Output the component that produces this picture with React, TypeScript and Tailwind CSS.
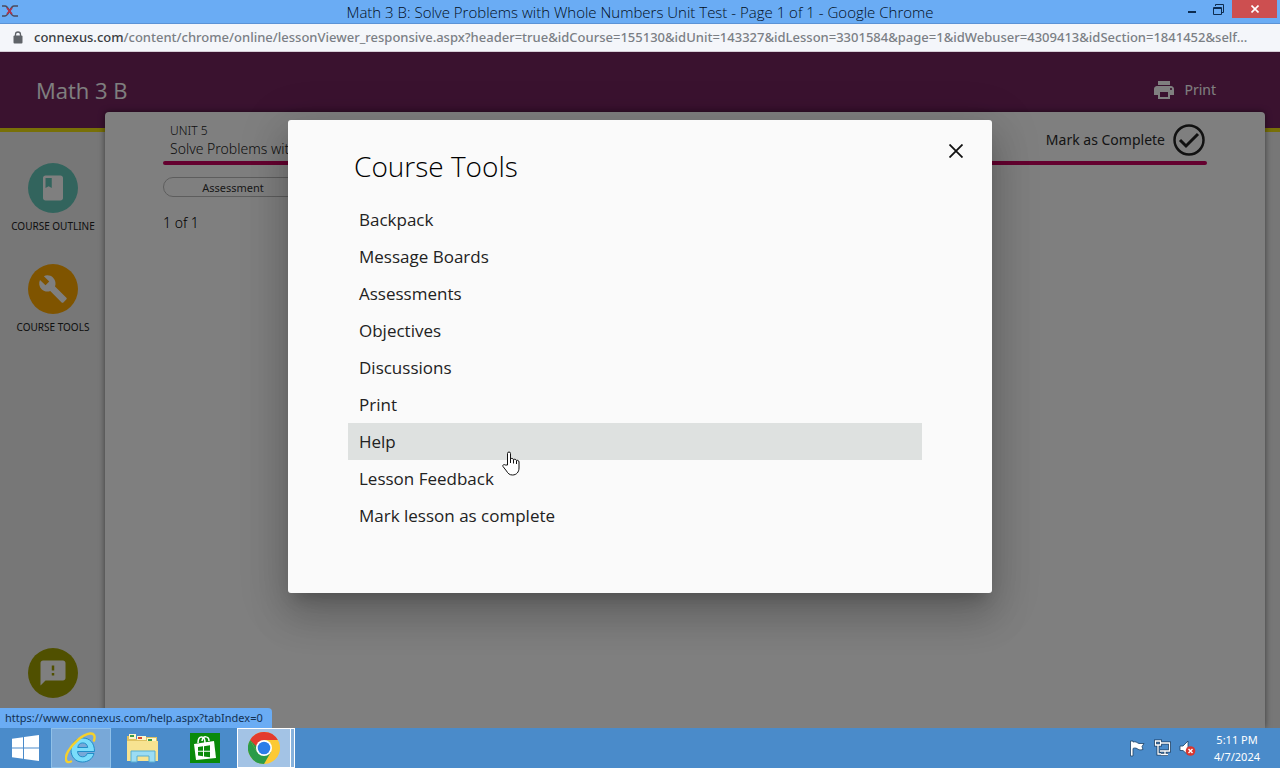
import type { ReactNode } from "react";

const tools = [
  "Backpack",
  "Message Boards",
  "Assessments",
  "Objectives",
  "Discussions",
  "Print",
  "Help",
  "Lesson Feedback",
  "Mark lesson as complete",
];

function TitleBar() {
  return (
    <header className="grid h-6 grid-cols-[1fr_auto_1fr] border-b border-[#5b93d6] bg-[#6aacf4]">
      <svg className="mt-1 ml-px" width="17" height="14" viewBox="0 0 17 14" fill="none" strokeWidth="1.600">
        <path d="M1 2h3c2 0 3 2 4.500 5S11 12 13 12h4" stroke="#4b4a5c" />
        <path d="M1 12h3c2 0 3-2 4.500-5S11 2 13 2h4" stroke="#4b4a5c" />
        <path d="M6 4l5 6M6 10l5-6" stroke="#b5344a" />
      </svg>
      <h1 className="font-['Open_Sans','Noto_Sans',sans-serif] text-[15px] leading-6 font-light text-[#020c1a]">
        Math 3 B: Solve Problems with Whole Numbers Unit Test - Page 1 of 1 - Google Chrome
      </h1>
      <div className="flex items-start justify-end pr-[3px]">
        <button aria-label="Minimize" className="flex h-[18px] w-6 items-end justify-center pb-[5px]">
          <span className="h-[2px] w-2 bg-[#0d2c50]" />
        </button>
        <button aria-label="Restore" className="flex h-[18px] w-7 items-center justify-center">
          <svg width="11" height="11" viewBox="0 0 11 11" fill="none" stroke="#0d2c50">
            <path d="M2.500 2V.5h8v8H9" />
            <path d="M.5 3.500h8v7h-8zM.5 4.500h8" />
          </svg>
        </button>
        <button aria-label="Close" className="flex h-[18px] w-[45px] items-center justify-center bg-[#cd4f50]">
          <svg width="8" height="8" viewBox="0 0 8 8" stroke="#fff" strokeWidth="1.600">
            <path d="M.5.5l7 7M7.500.5l-7 7" />
          </svg>
        </button>
      </div>
    </header>
  );
}

function AddressBar() {
  return (
    <div className="flex h-7 items-center gap-[11px] border-b border-[#d5cdd6] bg-[#f4f6fa] pl-[13px]">
      <svg className="shrink-0" width="10" height="13" viewBox="0 0 10 13">
        <rect x="0.500" y="4.500" width="9" height="8" rx="1" fill="#5f6368" />
        <path d="M2.500 5V3.500a2.500 2.500 0 0 1 5 0V5" fill="none" stroke="#5f6368" strokeWidth="1.300" />
      </svg>
      <p className="min-w-0 whitespace-nowrap text-[13px] font-medium text-[#7b7f85]">
        <span className="text-[#3a3d42]">connexus.com</span>
        /content/chrome/online/lessonViewer_responsive.aspx?header=true&amp;idCourse=155130&amp;idUnit=143327&amp;idLesson=3301584&amp;page=1&amp;idWebuser=4309413&amp;idSection=1841452&amp;self...
      </p>
    </div>
  );
}

function SideButton({ color, label, children }: { color: string; label?: string; children: ReactNode }) {
  return (
    <button aria-label={label ?? "Feedback"} className="flex flex-col items-center gap-[5px] whitespace-nowrap text-[10px] leading-4 text-[#222]">
      <span className={`flex size-[50px] items-center justify-center rounded-full ${color}`}>
        <svg width="30" height="30" viewBox="0 0 24 24" fill="#fff">
          {children}
        </svg>
      </span>
      {label}
    </button>
  );
}

function Lesson() {
  return (
    <div className="flex min-h-0 flex-1 flex-col bg-[#eee]">
      <div className="flex h-20 shrink-0 items-center justify-between border-b-4 border-[#f0e010] bg-[#74245f] pr-16 pl-9 text-white">
        <h2 className="font-['Open_Sans','Noto_Sans',sans-serif] text-[22px] leading-7">Math 3 B</h2>
        <button className="flex items-center gap-2 text-sm">
          <svg width="24" height="24" viewBox="0 0 24 24" fill="currentColor">
            <path d="M19 8H5c-1.660 0-3 1.340-3 3v6h4v4h12v-4h4v-6c0-1.660-1.340-3-3-3zm-3 11H8v-5h8v5zm3-7c-.55 0-1-.45-1-1s.45-1 1-1 1 .45 1 1-.45 1-1 1zm-1-9H6v4h12V3z" />
          </svg>
          Print
        </button>
      </div>
      <div className="flex min-h-0 flex-1 pr-[15px]">
        <nav className="flex w-[105px] shrink-0 flex-col items-center gap-[30px] pt-[31px] pl-px">
          <SideButton color="bg-[#64c8ba]" label="COURSE OUTLINE">
            <path d="M18 2H6c-1.100 0-2 .9-2 2v16c0 1.100.9 2 2 2h12c1.100 0 2-.9 2-2V4c0-1.100-.9-2-2-2zM6 4h5v8l-2.500-1.500L6 12V4z" />
          </SideButton>
          <SideButton color="bg-[#ffa800]" label="COURSE TOOLS">
            <path d="M22.700 19l-9.100-9.100c.9-2.300.4-5-1.500-6.900-2-2-5-2.400-7.400-1.300L9 6 6 9 1.600 4.700C.4 7.100.9 10.100 2.900 12.100c1.900 1.900 4.600 2.400 6.900 1.500l9.100 9.100c.4.4 1 .4 1.400 0l2.300-2.300c.5-.4.5-1.100.1-1.400z" />
          </SideButton>
          <div className="mt-auto pb-[30px]">
            <SideButton color="bg-[#a0a000]">
              <path d="M20 2H4c-1.100 0-1.990.9-1.990 2L2 22l4-4h14c1.100 0 2-.9 2-2V4c0-1.100-.9-2-2-2zm-7 12h-2v-2h2v2zm0-4h-2V6h2v4z" />
            </SideButton>
          </div>
        </nav>
        <main className="-mt-5 flex-1 rounded-t bg-white px-[58px] pt-[10px] shadow-[0_0_6px_rgba(0,0,0,0.5)]">
          <div className="flex items-center justify-between pb-[3px] text-[#222]">
            <div className="pl-[7px]">
              <p className="text-xs leading-[18px] font-light">UNIT 5</p>
              <p className="text-sm leading-[18px] font-light">Solve Problems with</p>
            </div>
            <button className="flex items-center gap-2 pr-[2px] text-sm text-[#2a2a2a]">
              Mark as Complete
              <svg width="32" height="32" viewBox="0 0 32 32" fill="none" stroke="#222" strokeWidth="2.500">
                <circle cx="16" cy="16" r="14.500" />
                <path d="M7 16l6 6 12-12" strokeWidth="3" />
              </svg>
            </button>
          </div>
          <div className="h-1 rounded-full bg-[#c8005f]" />
          <div className="mt-3 h-5 w-[140px] rounded-full border border-[#bbb] text-center text-[11px] leading-[19px] text-[#333]">
            Assessment
          </div>
          <p className="mt-4 text-sm leading-5 font-light text-black">1 of 1</p>
        </main>
      </div>
    </div>
  );
}

function CourseToolsDialog() {
  return (
    <section
      role="dialog"
      aria-labelledby="tools-title"
      className="relative w-[55%] rounded-[3px] bg-[#fafafa] pt-[26px] pr-[70px] pb-[59px] pl-[60px] font-['Open_Sans','Noto_Sans',sans-serif] shadow-[0_11px_15px_-7px_rgba(0,0,0,0.2),0_24px_38px_3px_rgba(0,0,0,0.14),0_9px_46px_8px_rgba(0,0,0,0.12)]"
    >
      <h2 id="tools-title" className="pb-[15px] pl-[6px] text-[28px] leading-10 font-light text-black">
        Course Tools
      </h2>
      <button aria-label="Close dialog" className="absolute top-[23px] right-7 p-px">
        <svg width="14" height="14" viewBox="0 0 14 14" stroke="#111" strokeWidth="1.800">
          <path d="M.5.5l13 13M13.500.5l-13 13" />
        </svg>
      </button>
      <ul>
        {tools.map((tool) => (
          <li key={tool}>
            <a
              href="#"
              className={`block pl-[11px] text-[17px] leading-[37px] text-[#222] ${tool === "Help" ? "bg-[#dee1e0]" : ""}`}
            >
              {tool}
            </a>
          </li>
        ))}
      </ul>
      <svg className="absolute top-[331px] left-[213px]" width="20" height="26" viewBox="0 0 20 26" fill="#fff" stroke="#111" strokeLinejoin="round">
        <path d="M6.500 14V2.500a1.500 1.500 0 0 1 3 0V8c.5-1 3-.8 3 .8.5-1 3-.6 3 .9.500-.8 2.500-.5 2.500 1.300V17c0 4-2.500 7-6.500 7-3 0-4.500-1.500-6-4L2 15.500c-.8-1.500 1-2.500 2.200-1.500z" />
        <path d="M9.500 8v4M12.500 9v3.500M15.500 10v3" fill="none" />
      </svg>
    </section>
  );
}

function Taskbar() {
  return (
    <footer className="flex h-10 shrink-0 items-stretch justify-between bg-[#4a8bca]">
      <div className="flex items-stretch">
        <button aria-label="Start" className="flex w-[51px] items-center justify-center">
          <svg width="27" height="26" viewBox="0 0 27 26" fill="#fff">
            <path d="M0 3.700l11-1.500v10.300H0zM12 2L27 0v12.500H12zM0 13.500h11v10.300L0 22.300zM12 13.500h15V26l-15-2z" />
          </svg>
        </button>
        <button aria-label="Internet Explorer" className="flex w-[60px] items-center justify-center border border-[#8fc0e8] bg-[#78a8d8]">
          <svg width="32" height="32" viewBox="0 0 32 32" fill="none">
            <path d="M29 21.500C27.500 27 23 30 17.500 30 10.500 30 6 25 6 18S11 6 17.500 6C25 6 29.500 11 29.500 19.500H12.500c.3 3.500 2.200 5.300 5.200 5.300 2.300 0 3.800-1.100 4.500-3.300zM12.700 15.500h10c-.4-3-2.200-4.600-5-4.600s-4.500 1.600-5 4.600z" fill="#7adcfb" stroke="#1887c4" strokeWidth=".9" />
            <path d="M6 29.500C1 32-1 27 3 19.500 8 10.500 18 2.500 25 1.500c4-.5 5.500 2.500 4 7" stroke="#f6d02c" strokeWidth="2.400" strokeLinecap="round" />
          </svg>
        </button>
        <button aria-label="File Explorer" className="flex w-[62px] items-center justify-center">
          <svg width="33" height="30" viewBox="0 0 33 30">
            <path d="M1 3h8v3h8V4h14v22H1z" fill="#dfc261" />
            <path d="M3 1h7v5H3z" fill="#fff6c9" />
            <path d="M11 3h9v4h-9z" fill="#fff6c9" />
            <path d="M21 5h9v4h-9z" fill="#fff6c9" />
            <path d="M4 2h4v2H4zM22 6h4v2h-4z" fill="#399b4b" />
            <path d="M12 4h4v2h-4z" fill="#d8472c" />
            <path d="M1 8h31v20H1z" fill="#f7e391" />
            <path d="M5 29V18h24v11h-6v-6H11v6z" fill="#9bdcf4" stroke="#58aed0" />
          </svg>
        </button>
        <button aria-label="Store" className="flex w-16 items-center justify-center">
          <svg width="30" height="30" viewBox="0 0 30 30">
            <path d="M0 0h30v30H0z" fill="#0a8a0a" />
            <path d="M4 11l20-3 2 17-20 2z" fill="#fff" />
            <path d="M8 10c0-8 7-8 7 0M12 8c1-6 7-5 7 0" fill="none" stroke="#fff" strokeWidth="1.500" />
            <path d="M8 14l5-.7v4.500H8zM14 13.200l6-.9v5.500h-6zM8 18.700h5v4.500l-5-.7zM14 18.700h6v5.500l-6-.8z" fill="#0a8a0a" />
          </svg>
        </button>
        <button aria-label="Google Chrome" className="flex">
          <span className="flex w-[54px] items-center justify-center self-stretch border border-white bg-[#a3c3e5]">
            <svg width="32" height="32" viewBox="0 0 32 32">
              <circle cx="16" cy="16" r="16" fill="#fcc934" />
              <path d="M2.140 8A16 16 0 0 0 16 32l6.900-12L9.070 20z" fill="#2a9b48" />
              <path d="M2.140 8L9.070 20 16 8z" fill="#2a9b48" />
              <path d="M2.140 8A16 16 0 0 1 29.860 8H16L8 14z" fill="#e33b2e" />
              <circle cx="16" cy="16" r="8" fill="#fff" />
              <circle cx="16" cy="16" r="6.300" fill="#2b7de9" />
            </svg>
          </span>
          <span className="w-1 self-stretch border-y border-r border-white bg-[#86b2dd]" />
        </button>
      </div>
      <div className="flex items-center gap-[18px] pr-5">
        <div className="flex items-center gap-2">
          <svg width="17" height="18" viewBox="0 0 17 18" fill="#fff" stroke="#1c4166" strokeWidth=".8">
            <path d="M1.500 2H4v1c3-1 4 1 6 1.500h5l-2 3 1 3c-3 1-5 0-6-1-2-.8-3-.5-4 0V17H1.500z" />
          </svg>
          <svg width="17" height="18" viewBox="0 0 17 18" fill="none">
            <path d="M6 4h9.500v8H6M11 12v3M7 15.500h7M1.500 2h5v4h-5zM4 6v9h3" stroke="#1c4166" strokeWidth="3" />
            <path d="M6 4h9.500v8H6M11 12v3M7 15.500h7M1.500 2h5v4h-5zM4 6v9h3" stroke="#fff" strokeWidth="1.300" />
          </svg>
          <svg width="17" height="18" viewBox="0 0 17 18">
            <path d="M1 7h3l5-5v14l-5-4.500H1z" fill="#fff" stroke="#1c4166" strokeWidth=".8" />
            <circle cx="11.500" cy="12" r="4.800" fill="#d8362f" />
            <path d="M9.500 10l4 4M13.500 10l-4 4" stroke="#fff" strokeWidth="1.400" />
          </svg>
        </div>
        <div className="text-center text-[11px] leading-[17px] text-white">
          <p>5:11 PM</p>
          <p>4/7/2024</p>
        </div>
      </div>
    </footer>
  );
}

export default function App() {
  return (
    <div className="flex h-screen flex-col overflow-hidden font-['Noto_Sans','Open_Sans',sans-serif]">
      <TitleBar />
      <AddressBar />
      <div className="relative flex min-h-0 flex-1 flex-col overflow-hidden">
        <Lesson />
        <div className="absolute inset-0 flex items-start justify-center bg-black/50 pt-[68px]">
          <CourseToolsDialog />
        </div>
        <p className="absolute bottom-0 left-0 rounded-tr bg-[#6aacf4] pr-[9px] pl-[5px] text-[11px] leading-5 text-[#123052]">
          https://www.connexus.com/help.aspx?tabIndex=0
        </p>
      </div>
      <Taskbar />
    </div>
  );
}
